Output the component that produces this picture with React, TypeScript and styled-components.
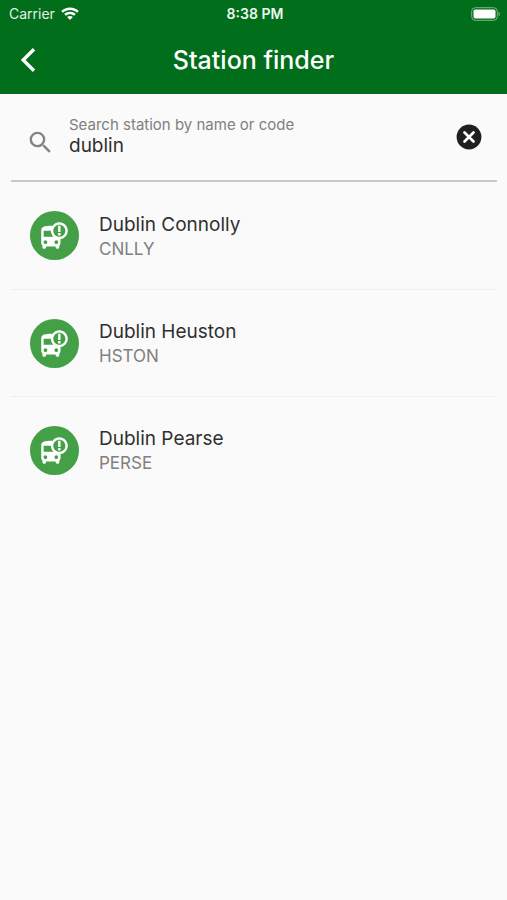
import React, { useState } from "react";
import styled, { createGlobalStyle } from "styled-components";
import { MdSearch } from "react-icons/md";

const GlobalStyle = createGlobalStyle`
  *, *::before, *::after { box-sizing: border-box; }
  body {
    margin: 0;
    background: #fafafa;
    color: #303030;
    font-family: Inter, "Liberation Sans", sans-serif;
  }
`;

const Screen = styled.div`
  min-height: 100vh;
  background: #fafafa;
`;

const Header = styled.header`
  background: #006e1a;
  color: #fff;
`;

const StatusBar = styled.div`
  display: grid;
  grid-template-columns: 1fr auto 1fr;
  align-items: center;
  height: 28px;
  padding: 0 6px 0 9px;
`;

const Carrier = styled.span`
  display: flex;
  align-items: center;
  gap: 6px;
  font-size: 14px;
  line-height: 20px;
  color: #e3f0e5;
`;

const Clock = styled.time`
  font-size: 14px;
  font-weight: 600;
  line-height: 20px;
  color: #eef7ef;
`;

const BatteryIcon = styled.svg`
  justify-self: end;
`;

const TitleBar = styled.div`
  display: grid;
  grid-template-columns: 56px 1fr 56px;
  align-items: center;
  height: 66px;
  padding-bottom: 2px;
`;

const IconButton = styled.button`
  display: grid;
  place-items: center;
  width: 56px;
  height: 48px;
  padding: 0;
  border: 0;
  background: none;
  color: inherit;
  cursor: pointer;
`;

const Title = styled.h1`
  margin: 0;
  text-align: center;
  font-size: 25px;
  font-weight: 500;
  line-height: 32px;
`;

const Content = styled.main`
  padding: 0 10px 0 11px;
`;

const SearchField = styled.div`
  display: grid;
  grid-template-columns: 58px 1fr 56px;
  align-items: center;
  height: 88px;
  border-bottom: 2px solid #c8c8c8;
`;

const SearchIcon = styled(MdSearch)`
  justify-self: center;
  margin-top: 10px;
  color: #858585;
`;

const SearchText = styled.div`
  display: flex;
  flex-direction: column;
  min-width: 0;
`;

const Label = styled.label`
  font-size: 15px;
  line-height: 18px;
  color: #808080;
`;

const Input = styled.input`
  width: 100%;
  height: 24px;
  padding: 0;
  border: 0;
  outline: 0;
  background: none;
  color: #303030;
  font: inherit;
  font-size: 19px;
  line-height: 24px;
`;

const StationList = styled.ul`
  margin: 0;
  padding: 0;
  list-style: none;
`;

const StationRow = styled.li`
  display: flex;
  align-items: center;
  gap: 20px;
  height: 107px;
  padding: 0 19px;

  & + & {
    border-top: 1px solid #efefef;
  }
`;

const Avatar = styled.span`
  display: grid;
  flex: none;
  place-items: center;
  width: 49px;
  height: 49px;
  border-radius: 50%;
  background: #43a047;
  color: #fff;
`;

const StationName = styled.div`
  font-size: 19px;
  line-height: 26px;
`;

const StationCode = styled.div`
  font-size: 17px;
  line-height: 22px;
  color: #808080;
`;

const Wifi = () => (
  <svg width="18" height="14" viewBox="0 0 18 14" fill="#fff" aria-hidden="true">
    <path d="M9 .4C5.600.4 2.500 1.700.2 3.900L2 5.700C3.900 4 6.300 3 9 3s5.100 1 7 2.700l1.800-1.800C15.500 1.700 12.400.4 9 .4z" />
    <path d="M9 4.700c-2.200 0-4.300.9-5.800 2.300L5 8.800C6.100 7.800 7.500 7.200 9 7.200s2.900.6 4 1.600L14.800 7C13.300 5.600 11.200 4.700 9 4.700z" />
    <path d="M9 8.900c-1.100 0-2.100.4-2.900 1.100L9 13l2.900-3c-.8-.7-1.800-1.100-2.900-1.100z" />
  </svg>
);

const Battery = () => (
  <BatteryIcon width="30" height="14" viewBox="0 0 30 14" role="img" aria-label="Battery full">
    <rect x="0.700" y="0.700" width="25.600" height="12.600" rx="3.600" fill="none" stroke="#7fb68a" strokeWidth="1" />
    <rect x="2.500" y="2.500" width="22" height="9" rx="1.800" fill="#fff" />
    <path d="M27.600 4.700c1.700.5 1.700 4.100 0 4.600z" fill="#7fb68a" />
  </BatteryIcon>
);

const BackChevron = () => (
  <svg width="16" height="26" viewBox="0 0 16 26" fill="none" aria-hidden="true">
    <path d="M14 2.300 3.200 13 14 23.700" stroke="#fff" strokeWidth="3.400" />
  </svg>
);

const ClearIcon = () => (
  <svg width="26" height="26" viewBox="0 0 26 26" aria-hidden="true">
    <circle cx="13" cy="13" r="12.400" fill="#1f1f1f" />
    <path d="m8.500 8.500 9 9m0-9-9 9" stroke="#fff" strokeWidth="2.700" strokeLinecap="round" />
  </svg>
);

const BusAlertIcon = () => (
  <svg width="29" height="29" viewBox="0 0 24 24" fill="currentColor" aria-hidden="true">
    <path d="M16 1c-2.400 0-4.520 1.210-5.780 3.050C9.840 4 9.420 4 9 4c-4.420 0-8 .5-8 4v10c0 .88.39 1.670 1 2.220V22c0 .55.45 1 1 1h1c.55 0 1-.45 1-1v-1h8v1c0 .55.45 1 1 1h1c.55 0 1-.45 1-1v-1.780c.61-.55 1-1.340 1-2.220v-3.080c3.390-.49 6-3.390 6-6.920 0-3.870-3.130-7-7-7zM4.500 19c-.83 0-1.500-.67-1.500-1.500S3.670 16 4.500 16s1.500.67 1.500 1.500S5.330 19 4.500 19zM3 13V8h6c0 1.960.81 3.730 2.110 5H3zm10.500 6c-.83 0-1.500-.67-1.500-1.500s.67-1.500 1.500-1.500 1.500.67 1.500 1.500-.67 1.500-1.500 1.500zm2.500-6c-2.760 0-5-2.240-5-5s2.240-5 5-5 5 2.240 5 5-2.240 5-5 5z" />
    <path d="M15 4h2v5h-2zM15 10h2v2h-2z" />
  </svg>
);

const stations = [
  { name: "Dublin Connolly", code: "CNLLY" },
  { name: "Dublin Heuston", code: "HSTON" },
  { name: "Dublin Pearse", code: "PERSE" },
];

export default function App() {
  const [query, setQuery] = useState("dublin");
  const term = query.trim().toLowerCase();
  const matches = stations.filter(
    ({ name, code }) => name.toLowerCase().includes(term) || code.toLowerCase().includes(term)
  );

  return (
    <Screen>
      <GlobalStyle />
      <Header>
        <StatusBar>
          <Carrier>
            Carrier
            <Wifi />
          </Carrier>
          <Clock>8:38 PM</Clock>
          <Battery />
        </StatusBar>
        <TitleBar>
          <IconButton type="button" aria-label="Back">
            <BackChevron />
          </IconButton>
          <Title>Station finder</Title>
        </TitleBar>
      </Header>
      <Content>
        <SearchField>
          <SearchIcon size={29} aria-hidden="true" />
          <SearchText>
            <Label htmlFor="station-search">Search station by name or code</Label>
            <Input id="station-search" type="text" value={query} onChange={(e) => setQuery(e.target.value)} />
          </SearchText>
          <IconButton type="button" aria-label="Clear search" onClick={() => setQuery("")}>
            <ClearIcon />
          </IconButton>
        </SearchField>
        <StationList>
          {matches.map(({ name, code }) => (
            <StationRow key={code}>
              <Avatar>
                <BusAlertIcon />
              </Avatar>
              <div>
                <StationName>{name}</StationName>
                <StationCode>{code}</StationCode>
              </div>
            </StationRow>
          ))}
        </StationList>
      </Content>
    </Screen>
  );
}
